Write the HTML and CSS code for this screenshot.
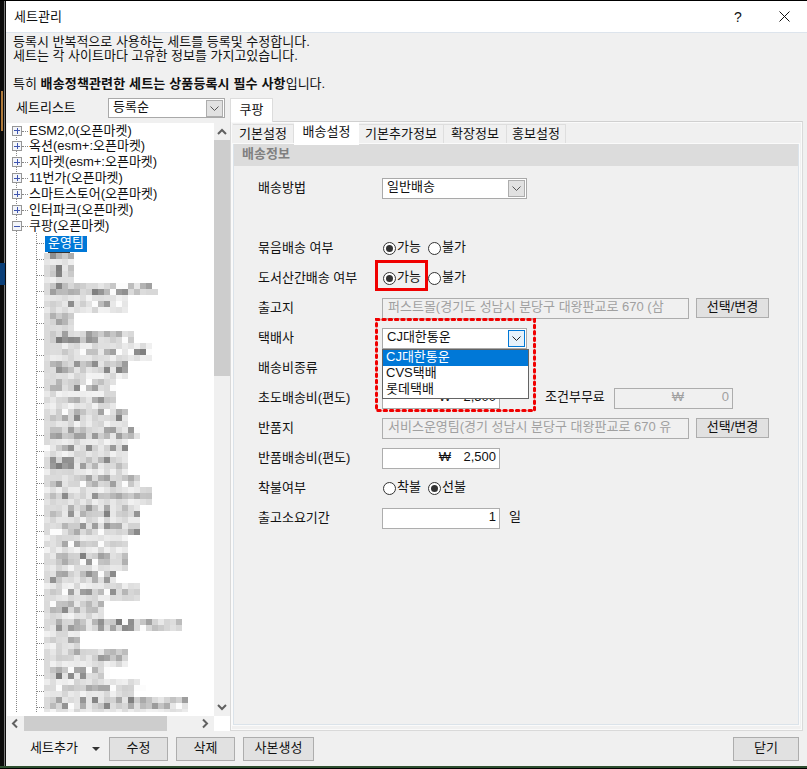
FILE: index.html
```html
<!DOCTYPE html>
<html lang="ko">
<head>
<meta charset="utf-8">
<title>세트관리</title>
<link rel="stylesheet" href="styles.css">
</head>
<body>
<div class="screen">
  <div class="desktop-edge"></div>
  <div class="window">
    <header class="titlebar">
      <span class="title">세트관리</span>
      <span class="help">?</span>
      <svg class="close" width="11" height="11" viewBox="0 0 11 11"><path d="M.5.5l10 10M10.5.5l-10 10" stroke="#111" fill="none"/></svg>
    </header>
    <div class="intro">
      <p>등록시 반복적으로 사용하는 세트를 등록및 수정합니다.</p>
      <p>세트는 각 사이트마다 고유한 정보를 가지고있습니다.</p>
      <p>&nbsp;</p>
      <p>특히 <b>배송정책관련한 세트는 상품등록시 필수 사항</b>입니다.</p>
    </div>
    <div class="main">
      <section class="left">
        <div class="list-head">
          <span class="list-label">세트리스트</span>
          <div class="select sort"><span class="select-text">등록순</span><span class="drop"><svg width="9" height="5" viewBox="0 0 9 5"><path d="M.5.5l4 4 4-4" stroke="#555" fill="none"/></svg></span></div>
        </div>
        <div class="tree-frame">
          <div class="tree">
            <svg id="guides" class="guides" width="207" height="593" viewBox="0 0 207 593" xmlns="http://www.w3.org/2000/svg"></svg>
            <ul class="nodes">
              <li class="node"><span class="pm plus"></span><span class="stub"></span>ESM2,0(오픈마켓)</li>
              <li class="node"><span class="pm plus"></span><span class="stub"></span>옥션(esm+:오픈마켓)</li>
              <li class="node"><span class="pm plus"></span><span class="stub"></span>지마켓(esm+:오픈마켓)</li>
              <li class="node"><span class="pm plus"></span><span class="stub"></span>11번가(오픈마켓)</li>
              <li class="node"><span class="pm plus"></span><span class="stub"></span>스마트스토어(오픈마켓)</li>
              <li class="node"><span class="pm plus"></span><span class="stub"></span>인터파크(오픈마켓)</li>
              <li class="node"><span class="pm"></span><span class="stub"></span>쿠팡(오픈마켓)</li>
              <li class="child"><span class="selected">운영팀</span></li>
            </ul>
          </div>
          <div class="vscroll">
            <svg width="16" height="17" viewBox="0 0 16 17"><path d="M4 11l4-4 4 4" stroke="#606060" stroke-width="2" fill="none"/></svg>
            <div class="vtrack"><div class="vthumb"></div></div>
            <svg width="16" height="17" viewBox="0 0 16 17"><path d="M4 6l4 4 4-4" stroke="#606060" stroke-width="2" fill="none"/></svg>
          </div>
          <div class="hscroll">
            <svg width="17" height="15" viewBox="0 0 17 15"><path d="M10 3.500l-4 4 4 4" stroke="#606060" stroke-width="2" fill="none"/></svg>
            <div class="htrack"><div class="hthumb"></div></div>
            <svg width="17" height="15" viewBox="0 0 17 15"><path d="M6 3.500l4 4-4 4" stroke="#606060" stroke-width="2" fill="none"/></svg>
          </div>
          <div class="corner"></div>
        </div>
      </section>
      <section class="right">
        <div class="outer-tabs"><span class="outer-tab">쿠팡</span></div>
        <div class="outer-body">
          <div class="inner-tabs">
            <span class="tab t1">기본설정</span>
            <span class="tab t2 active">배송설정</span>
            <span class="tab t3">기본추가정보</span>
            <span class="tab t4">확장정보</span>
            <span class="tab t5">홍보설정</span>
          </div>
          <div class="inner-body">
            <h2 class="band">배송정보</h2>
            <div class="form">
              <span class="label">배송방법</span>
              <div class="field"><div class="select ship"><span class="select-text">일반배송</span><span class="drop"><svg width="9" height="5" viewBox="0 0 9 5"><path d="M.5.5l4 4 4-4" stroke="#555" fill="none"/></svg></span></div></div>

              <span class="label"></span><div class="field"></div>

              <span class="label">묶음배송 여부</span>
              <div class="field radios"><span class="radio on"></span><span class="rtext">가능</span><span class="radio"></span><span class="rtext">불가</span></div>

              <span class="label">도서산간배송 여부</span>
              <div class="field radios"><span class="radio on"></span><span class="rtext">가능</span><span class="radio"></span><span class="rtext">불가</span></div>

              <span class="label">출고지</span>
              <div class="field"><span class="input wide off">퍼스트몰(경기도 성남시 분당구 대왕판교로 670 (삼</span><button class="btn pick">선택/변경</button></div>

              <span class="label">택배사</span>
              <div class="field">
                <div class="select ship"><span class="select-text">CJ대한통운</span><span class="drop focus"><svg width="9" height="5" viewBox="0 0 9 5"><path d="M.5.5l4 4 4-4" stroke="#222" fill="none"/></svg></span>
                  <ul class="menu">
                    <li class="menu-on">CJ대한통운</li>
                    <li>CVS택배</li>
                    <li>롯데택배</li>
                  </ul>
                </div>
              </div>

              <span class="label">배송비종류</span><div class="field"></div>

              <span class="label">초도배송비(편도)</span>
              <div class="field"><span class="input money"><span>₩</span><span class="amt">2,500</span></span><span class="cond">조건부무료</span><span class="input money off"><span>₩</span><span class="amt">0</span></span></div>

              <span class="label">반품지</span>
              <div class="field"><span class="input wide off">서비스운영팀(경기 성남시 분당구 대왕판교로 670 유</span><button class="btn pick">선택/변경</button></div>

              <span class="label">반품배송비(편도)</span>
              <div class="field"><span class="input money"><span>₩</span><span class="amt">2,500</span></span></div>

              <span class="label">착불여부</span>
              <div class="field radios"><span class="radio"></span><span class="rtext">착불</span><span class="radio on"></span><span class="rtext">선불</span></div>

              <span class="label">출고소요기간</span>
              <div class="field"><span class="input money days"><span class="amt">1</span></span><span class="unit">일</span></div>

              <div class="mark-solid"></div>
              <svg class="mark-dash" width="161" height="94" viewBox="0 0 161 94"><rect x="1.500" y="1.500" width="158" height="91" fill="none" stroke="#f00000" stroke-width="3" stroke-linecap="round" stroke-dasharray="2.500 3.800"/></svg>
            </div>
          </div>
        </div>
      </section>
    </div>
    <footer class="footer">
      <span class="add">세트추가</span>
      <span class="caret"></span>
      <button class="btn b1">수정</button>
      <button class="btn b2">삭제</button>
      <button class="btn b3">사본생성</button>
      <button class="btn close-btn">닫기</button>
    </footer>
  </div>
</div>
<script src="mosaic.js"></script>
</body>
</html>
```

FILE: styles.css
```css
* { box-sizing: border-box; }
html, body { margin: 0; padding: 0; }
body {
  width: 807px;
  height: 769px;
  overflow: hidden;
  background: #000;
  font: 13px/16px "Liberation Sans", "Noto Sans CJK KR", sans-serif;
  color: #111;
}
p, ul, h2 { margin: 0; padding: 0; }
ul { list-style: none; }
.screen {
  display: flex;
  height: 766px;
  padding-top: 1px;
}
.desktop-edge {
  width: 6px;
  background:
    linear-gradient(#0a3f78 0 0) 0 262px / 5px 22px no-repeat,
    linear-gradient(#b07a3a 0 0) 1px 90px / 2px 40px no-repeat,
    linear-gradient(#777 0 0) 4px 0 / 1px 100% no-repeat,
    #0b0b0b;
}
.window {
  width: 801px;
  display: flex;
  flex-direction: column;
  background: #f0f0f0;
}
body::after {
  content: "";
  display: block;
  height: 2px;
  background: #2f4f30;
}
.titlebar {
  display: flex;
  align-items: center;
  height: 32px;
  flex: none;
  background: #fff;
  border-bottom: 1px solid #dde4ec;
  padding-left: 8px;
}
.title { flex: 1; }
.help { width: 14px; margin-right: 34px; text-align: center; font-size: 14px; }
.close { margin-right: 17px; }
.intro { padding: 2px 0 0 7px; line-height: 14px; flex: none; height: 58px; }
.intro p { height: 14px; white-space: nowrap; }
.intro b { letter-spacing: 0.15px; }
.main { display: flex; height: 633px; margin-top: 7px; flex: none; }
.left { width: 224px; flex: none; display: flex; flex-direction: column; }
.list-head { display: flex; align-items: center; height: 20px; padding-left: 10px; margin-bottom: 5px; flex: none; }
.list-label { width: 92px; flex: none; }

.select {
  position: relative;
  display: flex;
  align-items: center;
  justify-content: space-between;
  height: 21px;
  background: #fff;
  border: 1px solid #a9a9a9;
  padding: 0 1px 0 4px;
}
.select-text { margin-top: -3px; }
.sort { width: 117px; height: 20px; }
.ship { width: 145px; }
.drop {
  display: flex;
  align-items: center;
  justify-content: center;
  width: 17px;
  height: 17px;
  background: #e1e1e1;
  border: 1px solid #adadad;
}
.drop.focus { background: #e5f1fb; border-color: #0078d7; }

.tree-frame {
  display: grid;
  grid-template-columns: 207px 16px;
  grid-template-rows: 593px 15px;
  margin-left: 1px;
}
.tree { position: relative; background: #fff; overflow: hidden; }
.guides { position: absolute; left: 0; top: 0; }
.nodes { position: relative; white-space: nowrap; }
.node { display: flex; align-items: center; height: 16px; padding-left: 5px; line-height: 14px; margin-bottom: 0; }
.node:first-child { height: 15px; }
.pm {
  width: 10px;
  height: 10px;
  flex: none;
  border: 1px solid #969696;
  background:
    linear-gradient(#3f55b0 0 0) center / 6px 1px no-repeat,
    #f3f5fa;
}
.pm.plus {
  background:
    linear-gradient(#3f55b0 0 0) center / 6px 1px no-repeat,
    linear-gradient(#3f55b0 0 0) center / 1px 6px no-repeat,
    #f3f5fa;
}
.stub {
  width: 6px;
  margin: 1px 1px 0 0;
  border-top: 1px dotted #888;
}
.child { height: 18px; padding: 2px 0 0 38px; }
.selected {
  display: block;
  width: 42px;
  height: 16px;
  padding-left: 3px;
  background: #0078d7;
  color: #fff;
  line-height: 14px;
}
.vscroll { display: flex; flex-direction: column; background: #f0f0f0; }
.vscroll svg { flex: none; }
.vtrack { flex: 1; }
.vthumb { height: 236px; background: #cdcdcd; }
.hscroll { display: flex; align-items: center; background: #f0f0f0; }
.hscroll svg { flex: none; }
.htrack { flex: 1; height: 15px; }
.hthumb { width: 143px; height: 15px; background: #cdcdcd; }
.corner { background: #fff; }

.right { width: 573px; flex: none; display: flex; flex-direction: column; }
.outer-tabs { height: 23px; flex: none; }
.outer-tab {
  display: block;
  width: 43px;
  height: 24px;
  position: relative;
  background: #fff;
  border: 1px solid #dcdcdc;
  border-bottom: 0;
  text-align: center;
  line-height: 21px;
  z-index: 1;
}
.outer-body {
  flex: 1;
  display: flex;
  flex-direction: column;
  border: 1px solid #d9d9d9;
  border-top-color: #d0d0d0;
  background: #f0f0f0;
  padding: 0 3px 5px 1px;
  box-shadow: inset 0 0 0 1px #fafafa;
}
.inner-tabs { display: flex; height: 22px; flex: none; align-items: flex-end; }
.tab {
  height: 20px;
  text-align: center;
  line-height: 18px;
  background: #f0f0f0;
  border: 1px solid #dedede;
  border-bottom: 0;
  border-left: 0;
  white-space: nowrap;
}
.t1 { width: 61px; margin-left: 1px; }
.t2 { width: 65px; }
.t3 { width: 85px; }
.t4 { width: 63px; }
.t5 { width: 59px; }
.tab.active {
  height: 23px;
  background: #fff;
  border: 0;
  line-height: 20px;
  margin-bottom: -1px;
  position: relative;
}
.inner-body {
  flex: 1;
  display: flex;
  flex-direction: column;
  margin-left: 1px;
  border: 1px solid #dbe3ea;
  border-top: 0;
  outline: 1px solid #fafafa;
  min-height: 0;
}
.band {
  height: 22px;
  flex: none;
  background: #dcdcdc;
  padding-left: 8px;
  font-size: 13px;
  font-weight: bold;
  line-height: 19px;
  color: #808080;
}
.form {
  position: relative;
  display: grid;
  grid-template-columns: 124px 1fr;
  grid-auto-rows: 30px;
  align-items: center;
  padding: 7px 0 0 24px;
}
.label { margin-top: -1px; white-space: nowrap; }
.field { display: flex; align-items: center; height: 30px; white-space: nowrap; }
.radios { padding-left: 1px; }
.radio {
  display: flex;
  align-items: center;
  justify-content: center;
  width: 13px;
  height: 13px;
  flex: none;
  border: 1px solid #333;
  border-radius: 50%;
  background: #fff;
}
.radio.on::after {
  content: "";
  width: 7px;
  height: 7px;
  border-radius: 50%;
  background: #333;
}
.rtext { width: 32px; padding-left: 1px; margin-top: -2px; }
.input {
  display: flex;
  align-items: center;
  height: 21px;
  flex: none;
  border: 1px solid #adadad;
  background: #fff;
  padding: 0 3px 2px 5px;
}
.input.wide { width: 307px; }
.input.off { background: #f0f0f0; color: #a0a0a0; }
.money { width: 118px; justify-content: flex-end; }
.money .amt { min-width: 45px; text-align: right; }
.money.off { width: 119px; }
.days .amt { min-width: 0; }
.cond { width: 114px; padding-left: 45px; margin-top: -2px; }
.unit { margin-left: 9px; margin-top: -2px; }
.btn {
  height: 20px;
  padding: 0 0 2px;
  border: 1px solid #adadad;
  background: #e1e1e1;
  font: inherit;
  color: #111;
}
.pick { width: 73px; margin-left: 7px; }
.menu {
  position: absolute;
  left: -1px;
  top: 20px;
  width: 147px;
  height: 50px;
  z-index: 3;
  background: #fff;
  border: 1px solid #646464;
  line-height: 14px;
}
.menu li { height: 16px; padding-left: 3px; }
.menu-on { background: #0078d7; color: #fff; }
.mark-solid {
  position: absolute;
  left: 141px;
  top: 94px;
  width: 53px;
  height: 31px;
  border: 3px solid #f00000;
  z-index: 4;
}
.mark-dash { position: absolute; left: 141px; top: 152px; z-index: 4; }

.footer { position: relative; display: flex; align-items: center; height: 24px; margin-top: 6px; flex: none; padding-left: 24px; }
.add { width: 62px; margin-top: -2px; }
.caret {
  width: 0;
  height: 0;
  border: 4px solid transparent;
  border-top: 4px solid #333;
  border-bottom: 0;
  margin-right: 9px;
}
.footer .btn { height: 24px; }
.b1, .b2 { width: 59px; margin-right: 8px; }
.b3 { width: 71px; }
.close-btn { width: 66px; margin-left: auto; margin-right: 8px; }
```

FILE: mosaic.js
```js
// Draws the tree's connector guides and the blurred (censored) child rows.
(function () {
  var svg = document.getElementById('guides');
  var NS = 'http://www.w3.org/2000/svg';
  var TOP = 123; // page y of the svg origin
  var LEFT = 7;  // page x of the svg origin

  function rect(x, y, w, h, fill) {
    var r = document.createElementNS(NS, 'rect');
    r.setAttribute('x', x - LEFT);
    r.setAttribute('y', y - TOP);
    r.setAttribute('width', w);
    r.setAttribute('height', h);
    r.setAttribute('fill', fill);
    svg.appendChild(r);
  }

  var y, x;
  for (y = 133; y < 713; y += 2) { rect(16, y, 1, 1, '#888'); }
  for (y = 233; y < 713; y += 2) { rect(36, y, 1, 1, '#888'); }
  for (y = 243; y < 713; y += 16) {
    for (x = 37; x < 45; x += 2) { rect(x, y, 1, 1, '#888'); }
  }

  var widths = [5,5,5,5,5,18,19,14,14,14,5,5,5,15,15,18,18,18,14,14,14,12,12,12,
    12,12,14,14,14,16,16,14,14,14,14,14,14,16,16,18,18,18,16,16,16,16,16,14,14,14,14,
    14,14,12,12,16,16,16,10,10,10,23,23,6,6,6,14,14,14,11,11,16,17,15,24,24,24];

  var seed = 20240611;
  function rand() {
    seed = (seed * 1664525 + 1013904223) % 4294967296;
    return seed / 4294967296;
  }

  rect(48, 252, 22, 1, '#333');

  widths.forEach(function (w, k) {
    var py = 253 + k * 6;
    var phase = ((py - 277) % 16 + 16) % 16;
    var light = phase < 3 || phase > 13;
    for (var i = 0; i < w; i++) {
      var r = rand();
      var depth = light ? 8 + r * 32 : 20 + r * r * 110 + (i % 2 ? 0 : 12);
      if (i === 0) { depth = Math.min(depth, 34); }
      if (!light && r > 0.94) { depth = 0; }
      var g = Math.round(252 - depth);
      rect(44 + i * 6, py, 6, py + 6 > 712 ? 712 - py : 6, 'rgb(' + g + ',' + g + ',' + g + ')');
    }
  });
})();
```
